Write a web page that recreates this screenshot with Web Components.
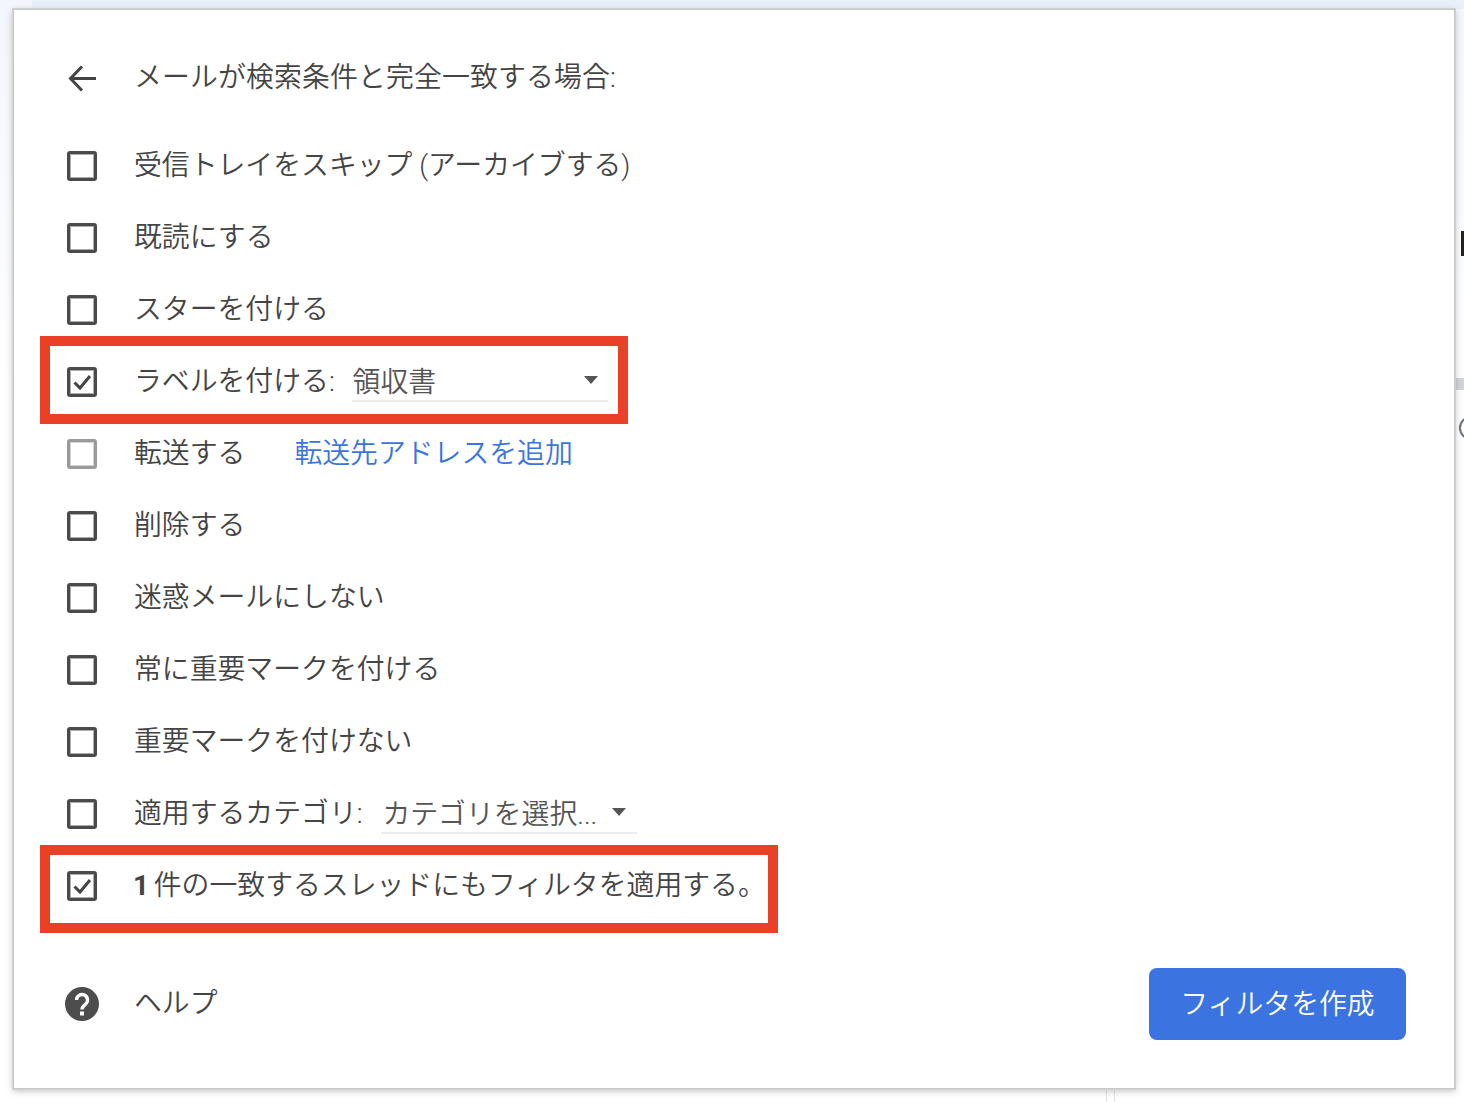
<!DOCTYPE html>
<html lang="ja">
<head>
<meta charset="utf-8">
<title>フィルタ</title>
<style>
  html, body { margin: 0; height: 1102px; overflow: hidden; background: #fff; }
  body { font-family: Roboto, "Noto Sans CJK JP", sans-serif; }
</style>
</head>
<body>
<filter-page>
  <filter-dialog>
    <div slot="header" style="letter-spacing:.15px">メールが検索条件と完全一致する場合:</div>
    <filter-row>受信トレイをスキップ (アーカイブする)</filter-row>
    <filter-row>既読にする</filter-row>
    <filter-row>スターを付ける</filter-row>
    <filter-row checked highlight="588" offset="-9">ラベルを付ける: <filter-select slot="extra" style="width:256px;margin-left:10px" value="領収書"></filter-select></filter-row>
    <filter-row disabled>転送する<a slot="extra" style="margin-left:49px;color:#3b74df;text-decoration:none" href="#">転送先アドレスを追加</a></filter-row>
    <filter-row>削除する</filter-row>
    <filter-row>迷惑メールにしない</filter-row>
    <filter-row>常に重要マークを付ける</filter-row>
    <filter-row>重要マークを付けない</filter-row>
    <filter-row>適用するカテゴリ: <filter-select slot="extra" style="width:256px;margin-left:12px" value="カテゴリを選択..." compact></filter-select></filter-row>
    <filter-row checked highlight="738" offset="-4"><b style="font-weight:700;margin-left:-1px;margin-right:-2px">1</b> 件の一致するスレッドにもフィルタを適用する。</filter-row>
    <span slot="help">ヘルプ</span>
    <span slot="action">フィルタを作成</span>
  </filter-dialog>
</filter-page>

<script>
class FilterPage extends HTMLElement {
  constructor() {
    super();
    this.attachShadow({ mode: 'open' });
    this.shadowRoot.innerHTML = `
      <style>
        :host { display: block; position: relative; width: 1464px; height: 1102px; overflow: hidden;
          background: linear-gradient(#f3f6fc, #fafbfe 200px, #fff 400px); padding: 9px 0 0 13px; box-sizing: border-box; }
        .strip { position: absolute; left: 32px; right: 0; top: 0; height: 9px; background: #e8f0fa; }
        .mark { position: absolute; background: #222; left: 1461px; top: 231px; width: 3px; height: 25px; }
        .bar { position: absolute; background: #d4d5d8; left: 1456px; top: 378px; width: 8px; height: 12px; }
        .ring { position: absolute; left: 1459px; top: 416px; width: 20px; height: 20px; border: 2px solid #70757a; border-radius: 50%; }
        .line { position: absolute; top: 1090px; bottom: 0; width: 1px; background: #e3e3e3; }
      </style>
      <div class="strip"></div>
      <div class="mark"></div><div class="bar"></div><div class="ring"></div>
      <div class="line" style="left:1106px"></div><div class="line" style="left:1114px"></div>
      <slot></slot>`;
  }
}

class FilterDialog extends HTMLElement {
  constructor() {
    super();
    this.attachShadow({ mode: 'open' });
    this.shadowRoot.innerHTML = `
      <style>
        :host { display: block; position: relative; width: 1442px; height: 1080px; box-sizing: border-box; background: #fff;
          border: 1px solid #c8c8c8; box-shadow: 0 0 0 1px #d2d2d2, 0 2px 7px rgba(0,0,0,.25);
          padding: 31px 48px 0 53px; color: #444; font-size: 27.85px; font-weight: 350; }
        .head, .foot { display: flex; align-items: center; }
        .head { height: 72px; margin-bottom: 16px; }
        .arrow { width: 30px; height: 30px; margin-right: 37px; flex: none; position: relative; top: 1px; }
        .title { position: relative; top: -2px; }
        .list { display: flex; flex-direction: column; }
        .foot { margin-top: 47px; height: 72px; justify-content: space-between; }
        .help { display: flex; align-items: center; }
        .help svg { width: 36px; height: 36px; margin: 0 34px 0 -3px; }
        .help span { position: relative; top: -3px; }
        .btn { width: 257px; height: 72px; border-radius: 8px; background: #3b73e0; color: #fff; display: flex; align-items: center; justify-content: center; }
        .btn span { position: relative; top: -2px; }
      </style>
      <div class="head">
        <svg class="arrow" viewBox="0 0 30 30" fill="none" stroke="#444" stroke-width="3"><path d="M29 15.5H4M15 3.5 3.5 15.5 15 27.5"/></svg>
        <span class="title"><slot name="header"></slot></span>
      </div>
      <div class="list"><slot></slot></div>
      <div class="foot">
        <div class="help">
          <svg viewBox="0 0 36 36"><circle cx="18" cy="18" r="17" fill="#4d4d4d"/><path d="M12.5 14a5.5 5.5 0 1 1 8.8 4.4c-2 1.5-3.3 2.4-3.3 5" fill="none" stroke="#fff" stroke-width="3.4"/><rect x="16" y="25.5" width="4" height="4" fill="#fff"/></svg>
          <span><slot name="help"></slot></span>
        </div>
        <div class="btn"><span><slot name="action"></slot></span></div>
      </div>`;
  }
}

class FilterRow extends HTMLElement {
  connectedCallback() {
    if (this.shadowRoot) return;
    this.attachShadow({ mode: 'open' });
    const w = this.getAttribute('highlight');
    const top = this.getAttribute('offset') || 0;
    const tick = this.hasAttribute('checked')
      ? '<svg viewBox="0 0 30 30" fill="none" stroke="#444" stroke-width="3"><path d="M7.5 15.5 13 21 23 9"/></svg>' : '';
    this.shadowRoot.innerHTML = `
      <style>
        :host { display: flex; align-items: center; position: relative; height: 72px; }
        .box { width: 30px; height: 30px; box-sizing: border-box; border: 3px solid #4a4a4a; border-radius: 3px; margin-right: 37px; flex: none; position: relative; top: 1px; box-shadow: inset 0 0 0 1px rgba(74,74,74,.45); }
        .box svg { position: absolute; left: -3px; top: -3px; width: 30px; height: 30px; }
        :host([disabled]) .box { border-color: #9a9a9a; box-shadow: inset 0 0 0 1px rgba(154,154,154,.45); }
        .label { display: flex; align-items: center; white-space: pre; position: relative; top: -2px; }
        .mark { position: absolute; left: -27px; height: 88px; box-sizing: border-box; border: 10px solid #ea4027; pointer-events: none; }
      </style>
      <span class="box">${tick}</span><span class="label"><span><slot></slot></span><slot name="extra"></slot></span>${w ? `<div class="mark" style="width:${w}px;top:${top}px"></div>` : ''}`;
  }
}

class FilterSelect extends HTMLElement {
  connectedCallback() {
    if (this.shadowRoot) return;
    this.attachShadow({ mode: 'open' });
    this.shadowRoot.innerHTML = `
      <style>
        :host { display: flex; align-items: center; box-sizing: border-box; height: 42px; border-bottom: 2px solid #ececec; color: #555; position: relative; top: 2px; }
        .text { padding-left: 1px; }
        .arrow { width: 0; height: 0; border: 7.5px solid transparent; border-top: 8px solid #555; border-bottom: 0; margin: 0 10px 0 auto; }
        :host([compact]) .arrow { margin: 0 9px 0 15px; }
      </style>
      <span class="text">${this.getAttribute('value')}</span><span class="arrow"></span>`;
  }
}

customElements.define('filter-page', FilterPage);
customElements.define('filter-dialog', FilterDialog);
customElements.define('filter-row', FilterRow);
customElements.define('filter-select', FilterSelect);
</script>
</body>
</html>
